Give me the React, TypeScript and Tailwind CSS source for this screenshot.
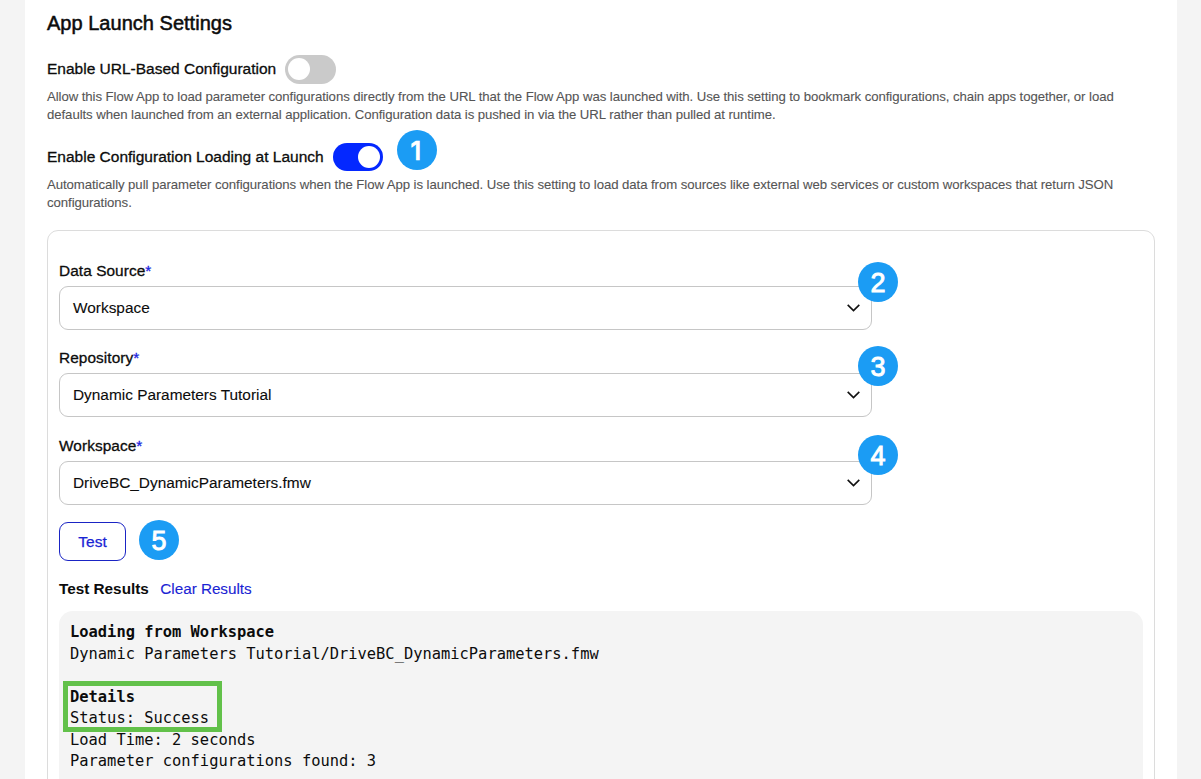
import { useState } from 'react';

type SelectFieldProps = {
  label: string;
  value: string;
  step: string;
  className: string;
  badgeClass: string;
  chevronClass?: string;
};

const StepBadge = ({ step, className }: { step: string; className: string }) => (
  <span
    className={`absolute flex h-10 w-10 items-center justify-center rounded-full bg-[#1b9cf4] pt-0.5 leading-none text-white ${className}`}
  >
    {step}
  </span>
);

const Toggle = ({ on, onChange }: { on: boolean; onChange: () => void }) => (
  <button
    role="switch"
    aria-checked={on}
    onClick={onChange}
    className={`flex items-center rounded-full px-[3px] ${
      on ? 'h-[28px] w-[50px] justify-end bg-[#0428ff]' : 'h-[29px] w-[51px] justify-start bg-[#cacaca]'
    }`}
  >
    <span className="h-[22px] w-[22px] rounded-full bg-white" />
  </button>
);

const SelectField = ({ label, value, step, className, badgeClass, chevronClass = '' }: SelectFieldProps) => (
  <div className={`w-[813px] ${className}`}>
    <div className="h-[26px] text-[15.4px] leading-[22px] tracking-[0.07px] [-webkit-text-stroke:0.3px]">
      {label}
      <span className="text-[#1a24e0]">*</span>
    </div>
    <div className="relative flex h-11 items-center justify-between rounded-[9px] border border-[#c6c6c6] pl-[13px] pr-[11px]">
      <span className="text-[15.4px] [-webkit-text-stroke:0.1px]">{value}</span>
      <svg className={`h-2 w-[13px] ${chevronClass}`} viewBox="0 0 13 8" fill="none" stroke="#111" strokeWidth="1.6">
        <path d="M0.7 0.9 6.5 6.6 12.3 0.9" />
      </svg>
      <StepBadge step={step} className={`-right-[27px] text-[27px] [-webkit-text-stroke:0.9px_white] ${badgeClass}`} />
    </div>
  </div>
);

export default function App() {
  const [urlConfig, setUrlConfig] = useState(false);
  const [launchConfig, setLaunchConfig] = useState(true);
  const [showResults, setShowResults] = useState(true);

  return (
    <div className="flex h-[779px] overflow-hidden bg-[#f4f4f4] pl-[25px] font-['Liberation_Sans',Arial,sans-serif] text-[#0c0c0c]">
      <main className="h-[860px] w-[1152px] bg-white px-[22px] pt-2">
        <h1 className="h-[30px] text-[20px] leading-[30px] tracking-[0.02px] [-webkit-text-stroke:0.5px]">App Launch Settings</h1>

        {/* URL-based configuration */}
        <div className="mt-4 flex h-[30px] items-center">
          <span className="w-[238px] text-[15.5px] whitespace-nowrap [-webkit-text-stroke:0.3px]">Enable URL-Based Configuration</span>
          <Toggle on={urlConfig} onChange={() => setUrlConfig(!urlConfig)} />
        </div>
        <p className="mt-1 text-[13.2px] leading-[18px] tracking-[-0.072px] whitespace-nowrap text-[#555] [-webkit-text-stroke:0.1px]">
          Allow this Flow App to load parameter configurations directly from the URL that the Flow App was launched with. Use this setting to bookmark configurations, chain apps together, or load
          <br />
          defaults when launched from an external application. Configuration data is pushed in via the URL rather than pulled at runtime.
        </p>

        {/* Loading at launch */}
        <div className="relative mt-[18px] flex h-[30px] items-center">
          <span className="w-[286px] text-[15.5px] whitespace-nowrap [-webkit-text-stroke:0.3px]">Enable Configuration Loading at Launch</span>
          <Toggle on={launchConfig} onChange={() => setLaunchConfig(!launchConfig)} />
          <StepBadge step="1" className="-top-3 left-[350px] pr-0.5 font-['Inter',sans-serif] text-[26px] font-medium [-webkit-text-stroke:0.7px_white]" />
        </div>
        <p className="mt-1 text-[13.2px] leading-[18px] tracking-[-0.07px] whitespace-nowrap text-[#555] [-webkit-text-stroke:0.1px]">
          Automatically pull parameter configurations when the Flow App is launched. Use this setting to load data from sources like external web services or custom workspaces that return JSON
          <br />
          configurations.
        </p>

        <section className="mt-[18px] h-[620px] rounded-[11px] border border-[#dcdcdc] px-[11px] pt-[29px]">
          <SelectField label="Data Source" value="Workspace" step="2" className="" badgeClass="-top-[25px]" />
          <SelectField label="Repository" value="Dynamic Parameters Tutorial" step="3" className="mt-[17px]" badgeClass="-top-[28px]" />
          <SelectField label="Workspace" value="DriveBC_DynamicParameters.fmw" step="4" className="mt-[18px]" badgeClass="-top-[27px]" />

          <div className="relative mt-[17px]">
            <button
              onClick={() => setShowResults(true)}
              className="block h-[39px] w-[67px] rounded-[9px] border border-[#1a24c4] text-[15.5px] text-[#1a24d4] [-webkit-text-stroke:0.25px]"
            >
              Test
            </button>
            <StepBadge step="5" className="-top-0.5 left-20 text-[27px] [-webkit-text-stroke:0.9px_white]" />
          </div>

          <div className="mt-[17px] flex h-[22px] items-center gap-[11.5px] text-[15.3px]">
            <h2 className="font-bold">Test Results</h2>
            <button onClick={() => setShowResults(false)} className="tracking-[-0.04px] text-[#1a24d4] [-webkit-text-stroke:0.1px]">
              Clear Results
            </button>
          </div>

          {showResults && (
            <div className="relative mt-[11px] h-[220px] rounded-[14px] bg-[#f4f4f4] px-[11px] pt-[11px] font-['DejaVu_Sans_Mono',monospace] text-[15.42px] leading-[21.5px]">
              <p className="font-bold">Loading from Workspace</p>
              <p>Dynamic Parameters Tutorial/DriveBC_DynamicParameters.fmw</p>
              <br />
              <p className="font-bold">Details</p>
              <p>Status: Success</p>
              <p>Load Time: 2 seconds</p>
              <p>Parameter configurations found: 3</p>
              <span className="absolute top-[70px] left-1 h-[51px] w-[159px] border-[5px] border-[#62c14a]" />
            </div>
          )}
        </section>
      </main>
    </div>
  );
}
